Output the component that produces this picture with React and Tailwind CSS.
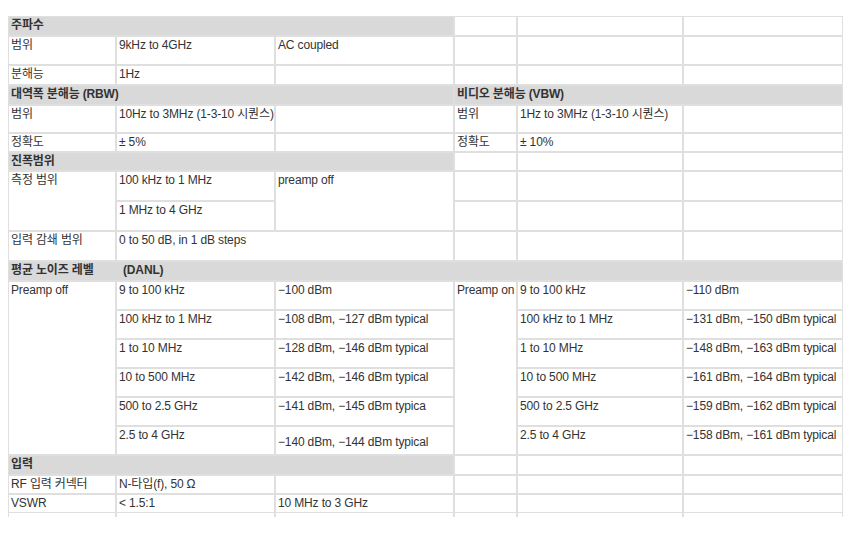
import React from 'react';

const td = 'border border-[#dfdfdf] px-[2px] pt-[1px] align-top whitespace-nowrap overflow-hidden';
const hd = 'border border-[#dfdfdf] bg-[#d9d9d9] px-[2px] pt-[1px] align-top font-bold whitespace-nowrap';

function Empty3() {
  return (
    <>
      <td className={td}></td>
      <td className={td}></td>
      <td className={td}></td>
    </>
  );
}

const danl = [
  ['9 to 100 kHz', '−100 dBm', '9 to 100 kHz', '−110 dBm'],
  ['100 kHz to 1 MHz', '−108 dBm, −127 dBm typical', '100 kHz to 1 MHz', '−131 dBm, −150 dBm typical'],
  ['1 to 10 MHz', '−128 dBm, −146 dBm typical', '1 to 10 MHz', '−148 dBm, −163 dBm typical'],
  ['10 to 500 MHz', '−142 dBm, −146 dBm typical', '10 to 500 MHz', '−161 dBm, −164 dBm typical'],
  ['500 to 2.5 GHz', '−141 dBm, −145 dBm typica', '500 to 2.5 GHz', '−159 dBm, −162 dBm typical'],
  ['2.5 to 4 GHz', '−140 dBm, −144 dBm typical', '2.5 to 4 GHz', '−158 dBm, −161 dBm typical'],
];

export default function App() {
  return (
    <div className="w-[857px] h-[533px] bg-white pl-[8px] pt-[16px] overflow-hidden">
      <table
        className="table-fixed border-separate border-spacing-0 w-[835px] text-[12px] leading-[15px] text-[#333333] tracking-[-0.15px]"
        style={{ fontFamily: '"Liberation Sans", Arial, "Noto Sans CJK KR", sans-serif' }}
      >
        <colgroup>
          <col className="w-[108px]" />
          <col className="w-[159px]" />
          <col className="w-[179px]" />
          <col className="w-[63px]" />
          <col className="w-[166px]" />
          <col className="w-[160px]" />
        </colgroup>
        <tbody>
          {/* 주파수 */}
          <tr className="h-[20px]">
            <td className={hd} colSpan={3}>주파수</td>
            <Empty3 />
          </tr>
          <tr className="h-[29px]">
            <td className={td}>범위</td>
            <td className={td}>9kHz to 4GHz</td>
            <td className={td}>AC coupled</td>
            <Empty3 />
          </tr>
          <tr className="h-[20px]">
            <td className={td}>분해능</td>
            <td className={td}>1Hz</td>
            <td className={td}></td>
            <Empty3 />
          </tr>

          {/* RBW / VBW */}
          <tr className="h-[20px]">
            <td className={hd} colSpan={3}>대역폭 분해능 (RBW)</td>
            <td className={hd} colSpan={3}>비디오 분해능 (VBW)</td>
          </tr>
          <tr className="h-[28px]">
            <td className={td}>범위</td>
            <td className={td}>10Hz to 3MHz (1-3-10 시퀀스)</td>
            <td className={td}></td>
            <td className={td}>범위</td>
            <td className={td}>1Hz to 3MHz (1-3-10 시퀀스)</td>
            <td className={td}></td>
          </tr>
          <tr className="h-[19px]">
            <td className={td}>정확도</td>
            <td className={td}>± 5%</td>
            <td className={td}></td>
            <td className={td}>정확도</td>
            <td className={td}>± 10%</td>
            <td className={td}></td>
          </tr>

          {/* 진폭범위 */}
          <tr className="h-[19px]">
            <td className={hd} colSpan={3}>진폭범위</td>
            <Empty3 />
          </tr>
          <tr className="h-[30px]">
            <td className={td} rowSpan={2}>측정 범위</td>
            <td className={td}>100 kHz to 1 MHz</td>
            <td className={td} rowSpan={2}>preamp off</td>
            <Empty3 />
          </tr>
          <tr className="h-[30px]">
            <td className={td}>1 MHz to 4 GHz</td>
            <Empty3 />
          </tr>
          <tr className="h-[30px]">
            <td className={td}>입력 감쇄 범위</td>
            <td className={td} colSpan={2}>0 to 50 dB, in 1 dB steps</td>
            <Empty3 />
          </tr>

          {/* DANL */}
          <tr className="h-[20px]">
            <td className={hd} colSpan={6}>
              <span className="inline-block w-[112px]">평균 노이즈 레벨</span>(DANL)
            </td>
          </tr>
          {danl.map((r, i) => (
            <tr key={i} className="h-[29px]">
              {i === 0 && (
                <td className={td} rowSpan={6}>Preamp off</td>
              )}
              <td className={td}>{r[0]}</td>
              <td className={i === 5 ? td + ' !pt-[8px]' : td}>{r[1]}</td>
              {i === 0 && (
                <td className={td} rowSpan={6}>Preamp on</td>
              )}
              <td className={td}>{r[2]}</td>
              <td className={td}>{r[3]}</td>
            </tr>
          ))}

          {/* 입력 */}
          <tr className="h-[20px]">
            <td className={hd} colSpan={3}>입력</td>
            <Empty3 />
          </tr>
          <tr className="h-[19px]">
            <td className={td}>RF 입력 커넥터</td>
            <td className={td}>N-타입(f), 50 Ω</td>
            <td className={td}></td>
            <Empty3 />
          </tr>
          <tr className="h-[19px]">
            <td className={td}>VSWR</td>
            <td className={td}>&lt; 1.5:1</td>
            <td className={td}>10 MHz to 3 GHz</td>
            <Empty3 />
          </tr>
          <tr className="h-[4px]">
            {[0, 1, 2, 3, 4, 5].map((k) => (
              <td key={k} className="border-x border-[#dfdfdf] p-0 h-[4px]"></td>
            ))}
          </tr>
        </tbody>
      </table>
    </div>
  );
}
